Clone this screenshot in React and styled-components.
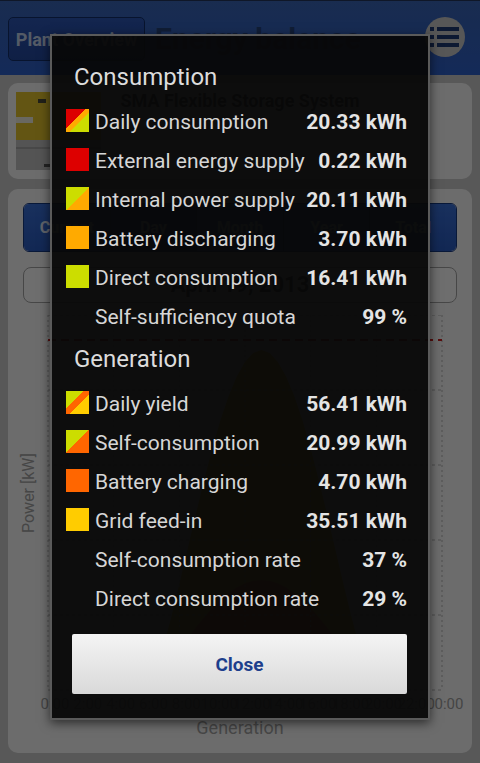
import React from 'react';
import styled, { createGlobalStyle } from 'styled-components';

const GlobalStyle = createGlobalStyle`
  html, body {
    margin: 0;
    padding: 0;
    background: #cdcdcd;
    font-family: Roboto, "Noto Sans", "Liberation Sans", sans-serif;
  }
`;

const Screen = styled.div`
  position: relative;
  width: 480px;
  height: 763px;
  overflow: hidden;
  background: #cdcdcd;
`;

const Header = styled.header`
  height: 75px;
  display: flex;
  align-items: flex-start;
  padding: 16px 15px 0 8px;
  box-sizing: border-box;
  background: linear-gradient(#3a66b8, #2f62cc);
  border-top: 1px solid #24365e;
`;

const BackButton = styled.button`
  width: 137px;
  height: 44px;
  padding: 0;
  border: 1px solid #13306c;
  border-radius: 5px;
  background: linear-gradient(#2d58b8, #2449a0);
  color: #c4d3ec;
  font: 700 18px Roboto, sans-serif;
  white-space: nowrap;
`;

const Title = styled.h1`
  flex: 1;
  margin: 4px 0 0 10px;
  font: 700 30px/36px Roboto, sans-serif;
  color: #27437c;
`;

const MenuButton = styled.div`
  width: 40px;
  height: 40px;
  border-radius: 50%;
  background: #c9c9c9;
  display: flex;
  align-items: center;
  justify-content: center;
`;

const Main = styled.main`
  display: flex;
  flex-direction: column;
  gap: 10px;
  padding: 8px 8px 10px;
`;

const Card = styled.section`
  background: #fbfbfb;
  border-radius: 10px;
  box-sizing: border-box;
  height: ${(p) => p.$height}px;
`;

const DeviceCard = styled(Card)`
  display: grid;
  grid-template-columns: 85px 1fr 85px;
  padding: 9px 8px;
`;

const DeviceName = styled.div`
  text-align: center;
  font: 700 18px/18px Roboto, sans-serif;
  color: #3b3b3b;
  white-space: nowrap;
`;

const ChartCard = styled(Card)`
  display: flex;
  flex-direction: column;
  padding: 14px 8px 0;
`;

const Segmented = styled.div`
  display: flex;
  height: 49px;
  margin: 0 7px;
  border: 1px solid #173a84;
  border-radius: 6px;
  overflow: hidden;
  box-sizing: border-box;
`;

const Segment = styled.div`
  flex: 1;
  display: flex;
  align-items: center;
  justify-content: center;
  background: ${(p) => (p.$active ? 'linear-gradient(#1f4aa5, #1b3f8e)' : 'linear-gradient(#3a70d8, #2a5cc2)')};
  border-left: ${(p) => (p.$first ? 'none' : '1px solid #17397f')};
  color: #dce6f6;
  font: 700 16px Roboto, sans-serif;
`;

const DateBox = styled.div`
  height: 36px;
  margin: 15px 7px 0;
  border: 1px solid #a5a5a5;
  border-radius: 8px;
  box-sizing: border-box;
  background: #fff;
  text-align: center;
  font: 700 22px/34px Roboto, sans-serif;
  color: #3a3a3a;
`;

const ChartRow = styled.div`
  display: flex;
  height: 397px;
  margin-top: 12px;
`;

const AxisTitle = styled.div`
  width: 24px;
  display: flex;
  align-items: center;
  justify-content: center;
  writing-mode: vertical-rl;
  transform: rotate(180deg);
  font: 400 16px Roboto, sans-serif;
  color: #a2a2a2;
  padding-top: 40px;
`;

const ChartCaption = styled.div`
  margin-top: 4px;
  text-align: center;
  font: 400 18px/24px Roboto, sans-serif;
  color: #a6a6a6;
`;

const Scrim = styled.div`
  position: absolute;
  inset: 0;
  background: rgba(0, 0, 0, 0.57);
`;

const Dialog = styled.div`
  position: absolute;
  top: 34px;
  left: 50px;
  width: 380px;
  height: 686px;
  box-sizing: border-box;
  padding: 26px 21px 0 14px;
  border: 2px solid #5a5a5a;
  background: rgba(7, 7, 7, 0.94);
  box-shadow: 0 3px 10px rgba(0, 0, 0, 0.6);
`;

const SectionTitle = styled.h2`
  margin: ${(p) => (p.$first ? '0' : '8px')} 0 10px 8px;
  font: 400 24px/30px Roboto, sans-serif;
  color: #dcdcdc;
`;

const Row = styled.div`
  display: flex;
  align-items: center;
  height: 39px;
`;

const Swatch = styled.span`
  flex: none;
  width: 23px;
  height: 23px;
  margin: -3px 6px 0 0;
  background: ${(p) => p.$fill || 'transparent'};
`;

const Label = styled.span`
  flex: 1;
  font: 400 21px Roboto, sans-serif;
  color: #d6d6d6;
  white-space: nowrap;
`;

const Value = styled.span`
  font: 700 21px Roboto, sans-serif;
  color: #e4e4e4;
  white-space: nowrap;
`;

const CloseButton = styled.button`
  display: block;
  width: calc(100% - 6px);
  height: 60px;
  margin: 16px 0 0 6px;
  border: none;
  border-radius: 2px;
  background: linear-gradient(#f4f4f4, #d9d9d9);
  color: #1d3f8c;
  font: 700 19px Roboto, sans-serif;
`;

const RED = '#dd0000';
const ORANGE = '#ffaa00';
const LIME = '#ccdd00';
const DEEP = '#ff6600';
const YELLOW = '#ffcc00';

const consumption = [
  { fill: `linear-gradient(135deg, ${RED} 42%, ${ORANGE} 42%, ${ORANGE} 58%, ${LIME} 58%)`, label: 'Daily consumption', value: '20.33 kWh' },
  { fill: RED, label: 'External energy supply', value: '0.22 kWh' },
  { fill: `linear-gradient(135deg, ${LIME} 52%, ${ORANGE} 52%)`, label: 'Internal power supply', value: '20.11 kWh' },
  { fill: ORANGE, label: 'Battery discharging', value: '3.70 kWh' },
  { fill: LIME, label: 'Direct consumption', value: '16.41 kWh' },
  { label: 'Self-sufficiency quota', value: '99 %' },
];

const generation = [
  { fill: `linear-gradient(135deg, ${LIME} 38%, ${DEEP} 38%, ${DEEP} 58%, ${YELLOW} 58%)`, label: 'Daily yield', value: '56.41 kWh' },
  { fill: `linear-gradient(135deg, ${LIME} 50%, ${DEEP} 50%)`, label: 'Self-consumption', value: '20.99 kWh' },
  { fill: DEEP, label: 'Battery charging', value: '4.70 kWh' },
  { fill: YELLOW, label: 'Grid feed-in', value: '35.51 kWh' },
  { label: 'Self-consumption rate', value: '37 %' },
  { label: 'Direct consumption rate', value: '29 %' },
];

const tabs = ['Current', 'Day', 'Month', 'Year', 'Total'];

const MenuIcon = () => (
  <svg width="40" height="40" viewBox="0 0 40 40">
    {[10, 18, 26].map((y) => (
      <g key={y} fill="#1f3a74">
        <rect x="5" y={y} width="4" height="4" />
        <rect x="12" y={y} width="22" height="4" />
      </g>
    ))}
  </svg>
);

const Inverter = () => (
  <svg width="85" height="78" viewBox="0 0 85 78">
    <rect x="0" y="0" width="85" height="48" fill="#e6c62c" />
    <rect x="22" y="7" width="8" height="4" fill="#4a4a3a" />
    <rect x="0" y="25" width="17" height="6" fill="#f4f0e0" />
    <rect x="0" y="48" width="85" height="30" fill="#c4c4c4" />
    <rect x="0" y="55" width="85" height="2" fill="#a8a8a8" />
    <rect x="28" y="72" width="6" height="3" fill="#555" />
  </svg>
);

const hours = Array.from({ length: 13 }, (_, i) => i * 2);

const Plot = () => {
  const left = 8;
  const right = 402;
  const bottom = 375;
  const x = (h) => left + ((right - left) * h) / 24;
  const curve = (peak, power) => {
    const pts = [];
    for (let h = 6; h <= 20; h += 0.5) {
      const t = Math.sin(((h - 6) / 14) * Math.PI);
      pts.push(`${x(h).toFixed(1)},${(bottom - peak * Math.pow(t, power)).toFixed(1)}`);
    }
    return `${x(6)},${bottom} ${pts.join(' ')} ${x(20)},${bottom}`;
  };
  return (
    <svg width="424" height="397" viewBox="0 0 424 397">
      <polygon points={curve(340, 1.4)} fill={YELLOW} />
      <polygon points={curve(110, 1.2)} fill={DEEP} />
      {[0, 75, 150, 225, 300, 375].map((y) => (
        <line key={y} x1={left} x2={right} y1={y} y2={y} stroke="#b5b5b5" strokeDasharray="3 3" />
      ))}
      {[0, 4, 8, 12, 16, 20, 24].map((h) => (
        <line key={h} x1={x(h)} x2={x(h)} y1={0} y2={bottom} stroke="#b5b5b5" strokeDasharray="2 3" />
      ))}
      <line x1={left} x2={right} y1={25} y2={25} stroke="#c22" strokeWidth="2" strokeDasharray="8 5" />
      {hours.map((h) => (
        <text key={h} x={x(h) + 7} y={394} textAnchor="middle" fontFamily="Roboto, sans-serif" fontSize="15" fill="#a0a0a0">
          {`${h % 24}:00`}
        </text>
      ))}
    </svg>
  );
};

const Section = ({ title, rows, first }) => (
  <>
    <SectionTitle $first={first}>{title}</SectionTitle>
    {rows.map((r) => (
      <Row key={r.label}>
        <Swatch $fill={r.fill} />
        <Label>{r.label}</Label>
        <Value>{r.value}</Value>
      </Row>
    ))}
  </>
);

export default function App() {
  return (
    <>
      <GlobalStyle />
      <Screen>
        <Header>
          <BackButton>Plant Overview</BackButton>
          <Title>Energy balance</Title>
          <MenuButton>
            <MenuIcon />
          </MenuButton>
        </Header>
        <Main>
          <DeviceCard $height={96}>
            <Inverter />
            <DeviceName>SMA Flexible Storage System</DeviceName>
          </DeviceCard>
          <ChartCard $height={564}>
            <Segmented>
              {tabs.map((t, i) => (
                <Segment key={t} $first={i === 0} $active={t === 'Day'}>
                  {t}
                </Segment>
              ))}
            </Segmented>
            <DateBox>April 19, 2013</DateBox>
            <ChartRow>
              <AxisTitle>Power [kW]</AxisTitle>
              <Plot />
            </ChartRow>
            <ChartCaption>Generation</ChartCaption>
          </ChartCard>
        </Main>
        <Scrim />
        <Dialog>
          <Section title="Consumption" rows={consumption} first />
          <Section title="Generation" rows={generation} />
          <CloseButton>Close</CloseButton>
        </Dialog>
      </Screen>
    </>
  );
}
